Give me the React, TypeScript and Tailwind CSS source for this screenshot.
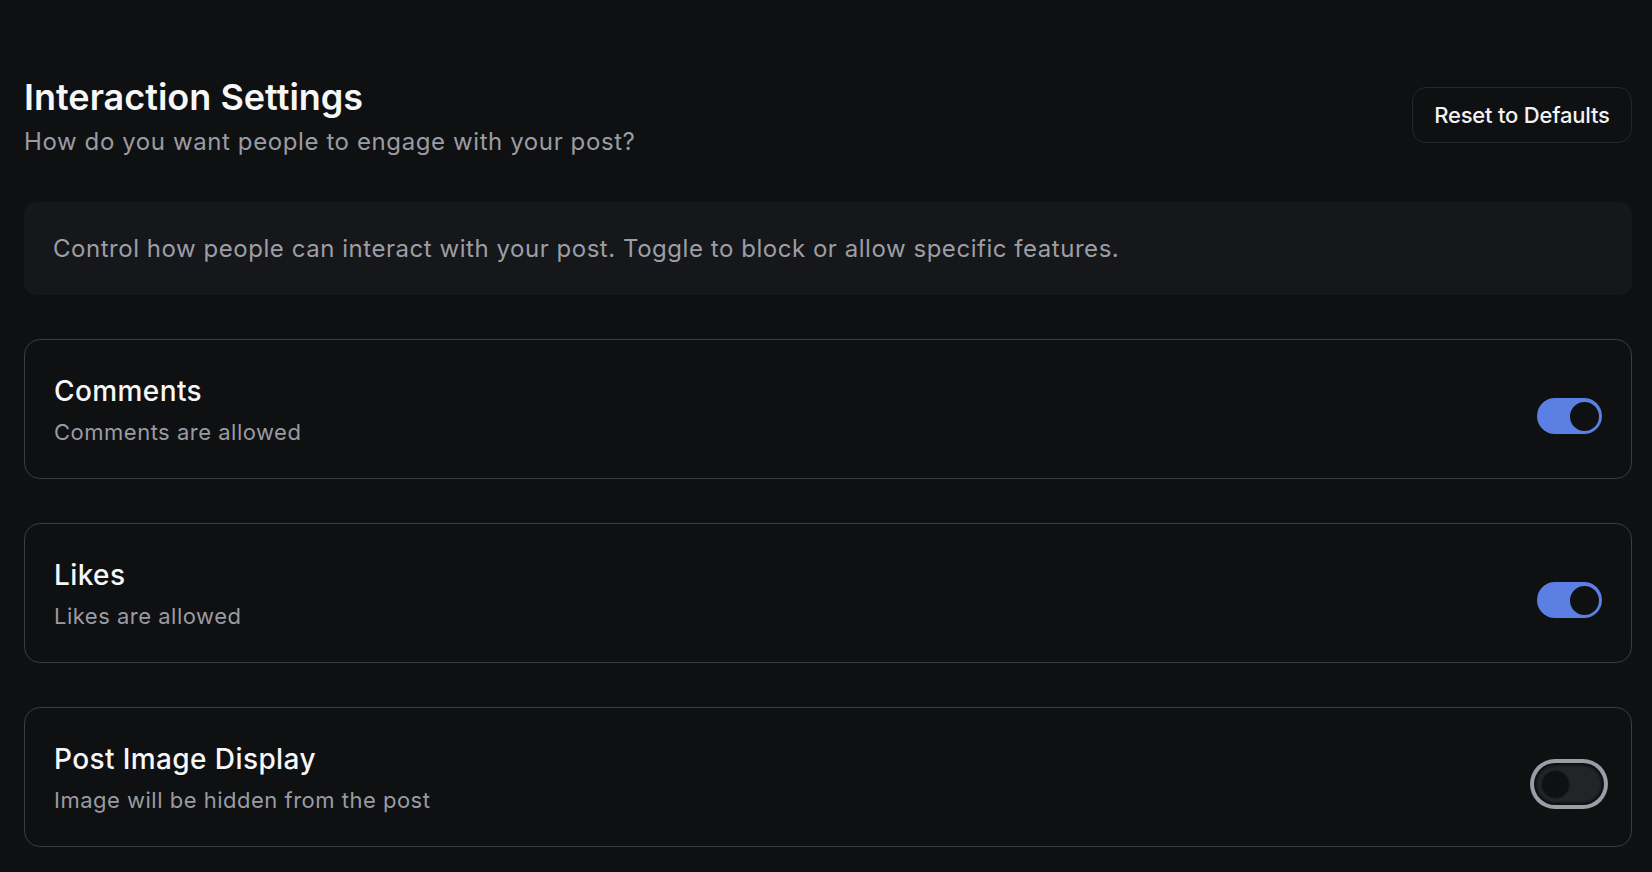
import { useState } from "react";

type Setting = {
  key: string;
  title: string;
  on: string;
  off: string;
};

const SETTINGS: Setting[] = [
  { key: "comments", title: "Comments", on: "Comments are allowed", off: "Comments are blocked" },
  { key: "likes", title: "Likes", on: "Likes are allowed", off: "Likes are hidden" },
  {
    key: "image",
    title: "Post Image Display",
    on: "Image will be shown on the post",
    off: "Image will be hidden from the post",
  },
];

function Toggle({ checked, focused, onChange }: { checked: boolean; focused?: boolean; onChange: () => void }) {
  return (
    <button
      role="switch"
      aria-checked={checked}
      onClick={onChange}
      className={
        "flex shrink-0 items-center rounded-full p-[3px] " +
        (checked
          ? "h-[36px] w-[65px] justify-end bg-[#5b7fe3]"
          : "h-[38px] w-[66px] justify-start border-2 border-[#1b1c1f] bg-[#232428]") +
        (focused ? " ring-4 ring-[#9a9ea6] ring-offset-2 ring-offset-[#0f1012]" : "")
      }
    >
      <span
        className={
          "block rounded-full bg-[#0f1012] " +
          (checked ? "size-[29px]" : "size-[29px] border border-[#1c1d20]")
        }
      />
    </button>
  );
}

export default function App() {
  const [state, setState] = useState<Record<string, boolean>>({
    comments: true,
    likes: true,
    image: false,
  });

  return (
    <div
      className="min-h-screen bg-[#0f1012] pl-6 pr-5 pt-[77px] pb-6 text-white"
      style={{ fontFamily: "Inter, 'Noto Sans', sans-serif" }}
    >
      {/* Header */}
      <div className="flex items-start justify-between">
        <div>
          <h1 className="text-[36px] font-semibold leading-[40px] text-[#f7f7f8]">Interaction Settings</h1>
          <p className="mt-[9px] text-2xl leading-8 tracking-[0.6px] text-[#9b9ca3]">
            How do you want people to engage with your post?
          </p>
        </div>
        <button className="mt-[10px] h-14 w-[220px] rounded-[14px] border border-[#26272a] bg-[#0f1012] text-[22px] font-medium tracking-[-0.2px] text-[#f2f2f3]">
          Reset to Defaults
        </button>
      </div>

      {/* Info */}
      <div className="mt-11 rounded-xl bg-[#16171a] px-[29px] pt-[31px] pb-[30px] text-2xl leading-8 tracking-[0.54px] text-[#9d9ea5]">
        Control how people can interact with your post. Toggle to block or allow specific features.
      </div>

      {/* Settings list */}
      <div className="mt-11 flex flex-col gap-11">
        {SETTINGS.map((s) => (
          <div
            key={s.key}
            className="flex items-center justify-between rounded-2xl border border-[#3c3d41] bg-[#0f1012] px-[29px] pt-[30px] pb-[29px]"
          >
            <div>
              <div className="text-[28px] font-medium leading-[42px] tracking-[0.4px] text-[#f7f7f8]">{s.title}</div>
              <div className="mt-[3px] text-[22px] leading-[34px] tracking-[0.5px] text-[#9a9ba1]">
                {state[s.key] ? s.on : s.off}
              </div>
            </div>
            <div className="mt-[13px]">
              <Toggle
                checked={state[s.key]}
                focused={s.key === "image"}
                onChange={() => setState((p) => ({ ...p, [s.key]: !p[s.key] }))}
              />
            </div>
          </div>
        ))}
      </div>
    </div>
  );
}
